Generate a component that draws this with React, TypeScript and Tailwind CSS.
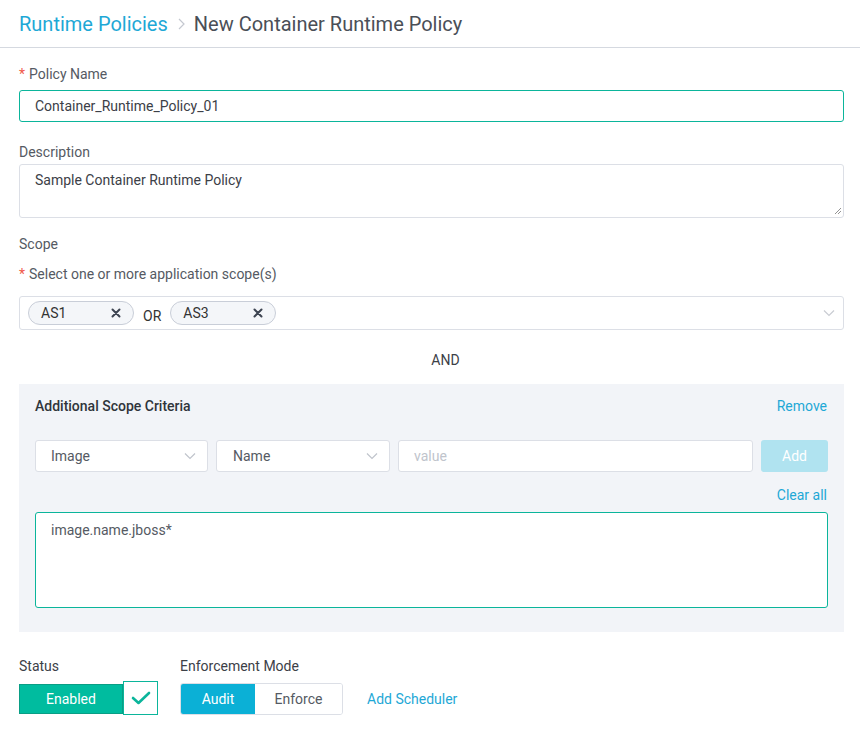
import React from "react";

const Chevron = ({ className = "" }: { className?: string }) => (
  <svg width="12" height="8" viewBox="0 0 12 8" className={className}>
    <path d="M1 1.5 L6 6.5 L11 1.5" fill="none" stroke="currentColor" strokeWidth="1.2" />
  </svg>
);

const XIcon = () => (
  <svg width="10" height="10" viewBox="0 0 10 10">
    <path d="M1.5 1.5 L8.5 8.5 M8.5 1.5 L1.5 8.5" stroke="#3d4451" strokeWidth="2" strokeLinecap="round" />
  </svg>
);

const Tag = ({ label }: { label: string }) => (
  <div className="flex items-center justify-between h-[24px] w-[106px] rounded-full border border-[#c9ced8] bg-[#f4f6f9] pl-[12px] pr-[12px] text-[14px] text-[#333]">
    <span>{label}</span>
    <XIcon />
  </div>
);

export default function App() {
  return (
    <div className="w-[860px] h-[729px] bg-white text-[#4a4f57] overflow-hidden" style={{ fontFamily: "Roboto, 'Liberation Sans', sans-serif" }}>
      <div className="h-[48px] border-b border-[#d5d9e0] flex items-center px-[19px] text-[20px]">
        <span className="text-[#1ea8d6]">Runtime Policies</span>
        <svg width="10" height="14" viewBox="0 0 10 14" className="mx-[8px] mt-[1px]">
          <path d="M3 2 L8 7 L3 12" fill="none" stroke="#c4c8d0" strokeWidth="1.2" />
        </svg>
        <span className="text-[#4a4f57]">New Container Runtime Policy</span>
      </div>

      <div className="px-[19px] pr-[16px]">
        <div className="pt-[16px] h-[36px] flex items-center text-[14px] text-[#555a63]">
          <span className="text-[#f0594a] mr-[4px]">*</span>Policy Name
        </div>
        <div className="mt-[6px] h-[32px] border border-[#0bb59b] rounded-[3px] flex items-center px-[15px] text-[14px] text-[#3c4047]">
          Container_Runtime_Policy_01
        </div>

        <div className="mt-[20px] h-[20px] flex items-center text-[14px] text-[#555a63]">Description</div>
        <div className="relative mt-[2px] h-[54px] border border-[#dcdfe6] rounded-[3px] px-[15px] pt-[5px] text-[14px] text-[#3c4047]">
          Sample Container Runtime Policy
          <svg width="8" height="8" viewBox="0 0 8 8" className="absolute right-[1px] bottom-[2px]">
            <path d="M7 1 L1 7 M7 4 L4 7" stroke="#777" strokeWidth="0.8" />
          </svg>
        </div>

        <div className="mt-[16px] h-[20px] flex items-center text-[14px] text-[#555a63]">Scope</div>
        <div className="mt-[10px] h-[20px] flex items-center text-[14px] text-[#555a63]">
          <span className="text-[#f0594a] mr-[4px]">*</span>Select one or more application scope(s)
        </div>
        <div className="mt-[12px] h-[34px] border border-[#dcdfe6] rounded-[3px] flex items-center pl-[8px] pr-[8px]">
          <Tag label="AS1" />
          <span className="mx-[9px] mt-[6px] text-[14px] text-[#333]">OR</span>
          <Tag label="AS3" />
          <div className="flex-1" />
          <Chevron className="text-[#c9ccd2]" />
        </div>

        <div className="mt-[20px] h-[20px] flex items-center justify-center pl-[28px] text-[14px] text-[#3c4047]">AND</div>

        <div className="mt-[14px] bg-[#f2f4f8] pl-[16px] pr-[16px] pt-[12px] pb-[24px]">
          <div className="h-[20px] flex items-center justify-between">
            <span className="text-[14px] font-medium text-[#2f343b]">Additional Scope Criteria</span>
            <span className="text-[14px] text-[#1ea8d6] mr-[1px]">Remove</span>
          </div>
          <div className="mt-[24px] flex items-center gap-[8px]">
            <div className="w-[173px] h-[32px] bg-white border border-[#dcdfe6] rounded-[3px] flex items-center justify-between pl-[15px] pr-[11px] text-[14px] text-[#555a63]">
              <span>Image</span>
              <Chevron className="text-[#c0c4cc]" />
            </div>
            <div className="w-[174px] h-[32px] bg-white border border-[#dcdfe6] rounded-[3px] flex items-center justify-between pl-[16px] pr-[11px] text-[14px] text-[#555a63]">
              <span>Name</span>
              <Chevron className="text-[#c0c4cc]" />
            </div>
            <div className="flex-1 h-[32px] bg-white border border-[#dcdfe6] rounded-[3px] flex items-center px-[15px] text-[14px] text-[#c0c4cc]">
              value
            </div>
            <div className="w-[67px] h-[32px] bg-[#b0e3f0] rounded-[3px] flex items-center justify-center text-[14px] text-white">Add</div>
          </div>
          <div className="mt-[13px] h-[20px] flex items-center justify-end text-[14px] text-[#1ea8d6]">
            <span className="mr-[1px]">Clear all</span>
          </div>
          <div className="mt-[7px] h-[96px] bg-white border border-[#0bb59b] rounded-[3px] px-[15px] pt-[7px] text-[14px] text-[#555a63]">
            image.name.jboss*
          </div>
        </div>

        <div className="mt-[24px] flex items-start">
          <div>
            <div className="h-[20px] flex items-center text-[14px] text-[#3c4047]">Status</div>
            <div className="mt-[5px] flex items-center">
              <div className="w-[104px] h-[30px] mt-[1px] bg-[#00bc9f] border border-[#0a9e85] flex items-center justify-center pt-[1px] text-[14px] text-white">Enabled</div>
              <div className="w-[35px] h-[34px] bg-white border border-[#0bb59b] flex items-center justify-center">
                <svg width="20" height="16" viewBox="0 0 20 16">
                  <path d="M2 8 L7.5 13 L18 3" fill="none" stroke="#0bb59b" strokeWidth="2.6" strokeLinecap="round" strokeLinejoin="round" />
                </svg>
              </div>
            </div>
          </div>
          <div className="ml-[22px]">
            <div className="h-[20px] flex items-center text-[14px] text-[#3c4047]">Enforcement Mode</div>
            <div className="mt-[7px] flex items-center">
              <div className="flex h-[32px] border border-[#dcdfe6] rounded-[3px] overflow-hidden">
                <div className="w-[74px] bg-[#0bb0d6] flex items-center justify-center text-[14px] text-white">Audit</div>
                <div className="w-[87px] bg-white flex items-center justify-center text-[14px] text-[#555a63]">Enforce</div>
              </div>
              <span className="ml-[24px] text-[14px] text-[#1ea8d6]">Add Scheduler</span>
            </div>
          </div>
        </div>
      </div>
    </div>
  );
}
